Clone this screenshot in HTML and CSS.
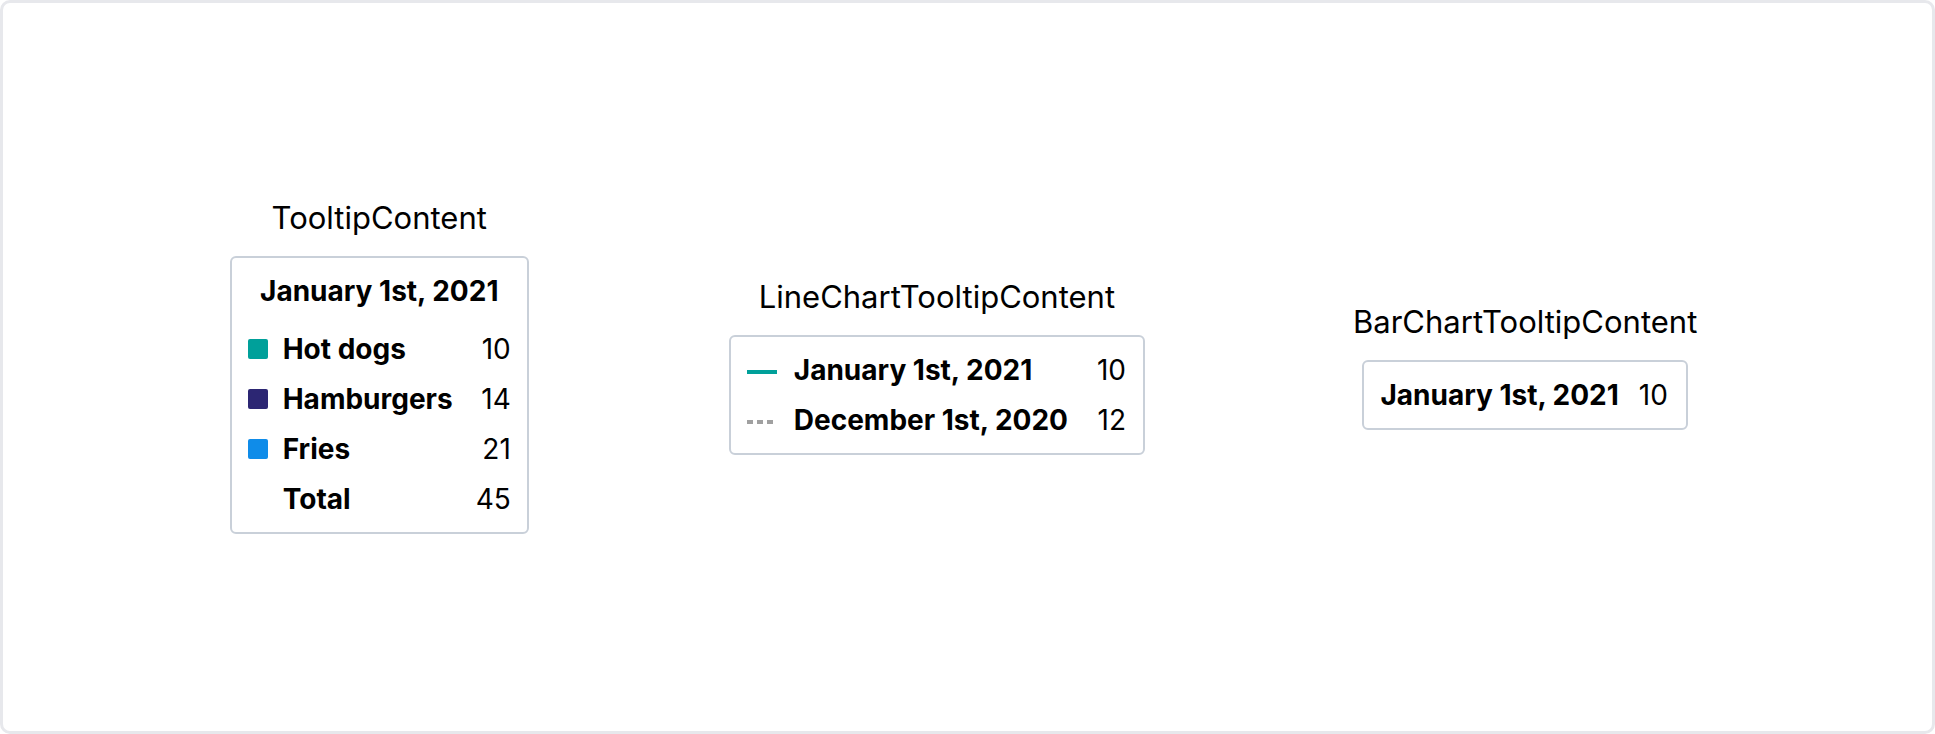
FILE: index.html
```html
<!DOCTYPE html>
<html lang="en">
<head>
<meta charset="utf-8">
<title>Tooltips</title>
<link rel="stylesheet" href="styles.css">
</head>
<body>
<div class="frame">
  <div class="group">
    <div class="title">TooltipContent</div>
    <div class="tooltip tooltip-full">
      <div class="heading">January 1st, 2021</div>
      <div class="rows">
        <span class="swatch swatch-teal"></span><span class="label">Hot dogs</span><span class="value">10</span>
        <span class="swatch swatch-navy"></span><span class="label">Hamburgers</span><span class="value">14</span>
        <span class="swatch swatch-blue"></span><span class="label">Fries</span><span class="value">21</span>
        <span class="swatch swatch-none"></span><span class="label">Total</span><span class="value">45</span>
      </div>
    </div>
  </div>

  <div class="group">
    <div class="title">LineChartTooltipContent</div>
    <div class="tooltip tooltip-line">
      <div class="rows rows-line">
        <svg class="line-icon" width="30" height="4" viewBox="0 0 30 4"><line x1="0" y1="2" x2="30" y2="2" stroke="#00a09a" stroke-width="4"/></svg>
        <span class="label">January 1st, 2021</span><span class="value">10</span>
        <svg class="line-icon" width="30" height="4" viewBox="0 0 30 4"><line x1="0" y1="2" x2="27" y2="2" stroke="#a0a0a0" stroke-width="4" stroke-dasharray="6 4"/></svg>
        <span class="label">December 1st, 2020</span><span class="value">12</span>
      </div>
    </div>
  </div>

  <div class="group group-bar">
    <div class="title">BarChartTooltipContent</div>
    <div class="tooltip tooltip-bar">
      <span class="label">January 1st, 2021</span><span class="value">10</span>
    </div>
  </div>
</div>
</body>
</html>
```

FILE: styles.css
```css
html, body {
  margin: 0;
  padding: 0;
  background: #ffffff;
}

body {
  font-family: Inter, "Liberation Sans", sans-serif;
  color: #000000;
}

.frame {
  box-sizing: border-box;
  width: 1935px;
  height: 734px;
  border: 3px solid #e7e8ec;
  border-radius: 10px;
  display: flex;
  align-items: center;
  justify-content: center;
  gap: 200px;
  padding-right: 8px;
}

.group {
  display: flex;
  flex-direction: column;
  align-items: center;
  gap: 20px;
}

.group-bar {
  margin-left: 8px;
}

.title {
  font-size: 31px;
  line-height: 36px;
  font-weight: 400;
  white-space: nowrap;
}

.tooltip {
  border: 2px solid #c9d0d9;
  border-radius: 6px;
  background: #ffffff;
  padding: 12px 16px;
  font-size: 28px;
  line-height: 42px;
  white-space: nowrap;
}

.heading {
  font-weight: 700;
  text-align: center;
  margin-bottom: 16px;
}

.rows {
  display: grid;
  grid-template-columns: 20px auto auto;
  column-gap: 15px;
  row-gap: 8px;
  align-items: center;
}

.rows-line {
  grid-template-columns: 30px auto auto;
  column-gap: 17px;
}

.label {
  font-weight: 700;
}

.value {
  font-weight: 400;
  text-align: right;
  margin-left: 8px;
}

.rows-line .value {
  margin-left: 12px;
}

.swatch {
  width: 20px;
  height: 20px;
  border-radius: 2px;
}

.swatch-teal { background: #00a09a; }
.swatch-navy { background: #2c2673; }
.swatch-blue { background: #0f8ce9; }
.swatch-none { background: transparent; }

.line-icon {
  display: block;
  margin-top: 4px;
}

.tooltip-line {
  padding-left: 16px;
  padding-right: 17px;
}

.tooltip-bar {
  display: flex;
  align-items: baseline;
  gap: 20px;
  padding-right: 18px;
}

.tooltip-bar .value {
  margin-left: 0;
}
```
